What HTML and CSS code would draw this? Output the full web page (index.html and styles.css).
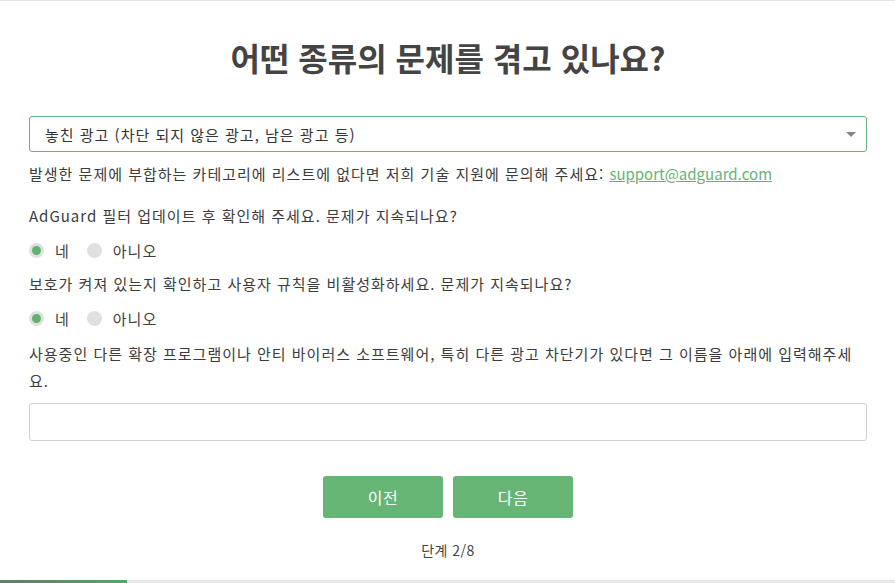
FILE: index.html
```html
<!DOCTYPE html>
<html lang="ko">
<head>
<meta charset="utf-8">
<link rel="stylesheet" href="styles.css">
</head>
<body>
<div class="topline"></div>
<main class="wrap">
  <h1 class="title">어떤 종류의 문제를 겪고 있나요?</h1>
  <div class="select">
    <span>놓친 광고 (차단 되지 않은 광고, 남은 광고 등)</span>
    <span class="caret"></span>
  </div>
  <p class="text help">발생한 문제에 부합하는 카테고리에 리스트에 없다면 저희 기술 지원에 문의해 주세요: <a href="#" class="link">support@adguard.com</a></p>
  <p class="text q">AdGuard 필터 업데이트 후 확인해 주세요. 문제가 지속되나요?</p>
  <div class="radios">
    <label class="radio"><span class="dot on"></span>네</label>
    <label class="radio"><span class="dot"></span>아니오</label>
  </div>
  <p class="text q2">보호가 켜져 있는지 확인하고 사용자 규칙을 비활성화하세요. 문제가 지속되나요?</p>
  <div class="radios">
    <label class="radio"><span class="dot on"></span>네</label>
    <label class="radio"><span class="dot"></span>아니오</label>
  </div>
  <p class="text long">사용중인 다른 확장 프로그램이나 안티 바이러스 소프트웨어, 특히 다른 광고 차단기가 있다면 그 이름을 아래에 입력해주세요.</p>
  <div class="input"></div>
  <div class="buttons">
    <button class="btn">이전</button>
    <button class="btn">다음</button>
  </div>
  <p class="step">단계 2/8</p>
</main>
<div class="progress"><div class="bar"></div></div>
</body>
</html>
```
FILE: styles.css
```css
html, body { margin: 0; padding: 0; background: #fff; }
body {
  width: 895px; height: 583px; overflow: hidden; position: relative;
  font-family: "Noto Sans CJK KR", "Liberation Sans", sans-serif;
  color: #3c3c3c;
}
.topline { height: 1px; background: #e4e4e4; }
.wrap { padding: 0 28px 0 29px; display: flex; flex-direction: column; }
.title {
  margin: 34px 0 0; text-align: center; font-size: 32px; font-weight: 700;
  color: #444; line-height: 44px;
}
.select {
  margin-top: 37px; height: 34px; border: 1px solid #67b279; border-radius: 3px;
  display: flex; align-items: center; justify-content: space-between;
  padding: 0 10px 0 15px; font-size: 15px; letter-spacing: 1px; color: #333;
}
.caret {
  width: 0; height: 0; border-left: 5px solid transparent; border-right: 5px solid transparent;
  border-top: 5px solid #888;
}
.text { margin: 0; font-size: 15px; line-height: 20px; letter-spacing: 1px; color: #3c3c3c; }
.help { margin-top: 12px; }
.link { color: #67b279; text-decoration: underline; letter-spacing: 0; }
.q { margin-top: 22px; }
.q2 { margin-top: 14px; }
.radios {
  display: flex; gap: 17px; margin-top: 14px; height: 20px; align-items: center;
  font-size: 15px; letter-spacing: 1px;
}
.radio { display: flex; align-items: center; gap: 11px; }
.dot {
  width: 15px; height: 15px; border-radius: 50%; background: #e0e0e0;
  display: flex; align-items: center; justify-content: center;
}
.dot.on::after { content: ""; width: 9px; height: 9px; border-radius: 50%; background: #5fb36f; }
.long { line-height: 27px; margin-top: 12px; }
.input { margin-top: 9px; height: 36px; border: 1px solid #cfcfcf; border-radius: 3px; }
.buttons { display: flex; justify-content: center; gap: 10px; margin-top: 35px; }
.btn {
  width: 120px; height: 42px; border: 0; border-radius: 3px; background: #66b574;
  color: #fff; font-family: inherit; font-size: 16px; letter-spacing: 0.5px;
}
.step { margin: 22px 0 0; text-align: center; font-size: 14px; line-height: 20px; letter-spacing: 0.5px; color: #444; }
.progress { position: absolute; left: 0; right: 0; bottom: 0; height: 3px; background: #e8e8e8; }
.bar { width: 127px; height: 100%; background: linear-gradient(90deg, #5e7d6a, #55a862); }
```
